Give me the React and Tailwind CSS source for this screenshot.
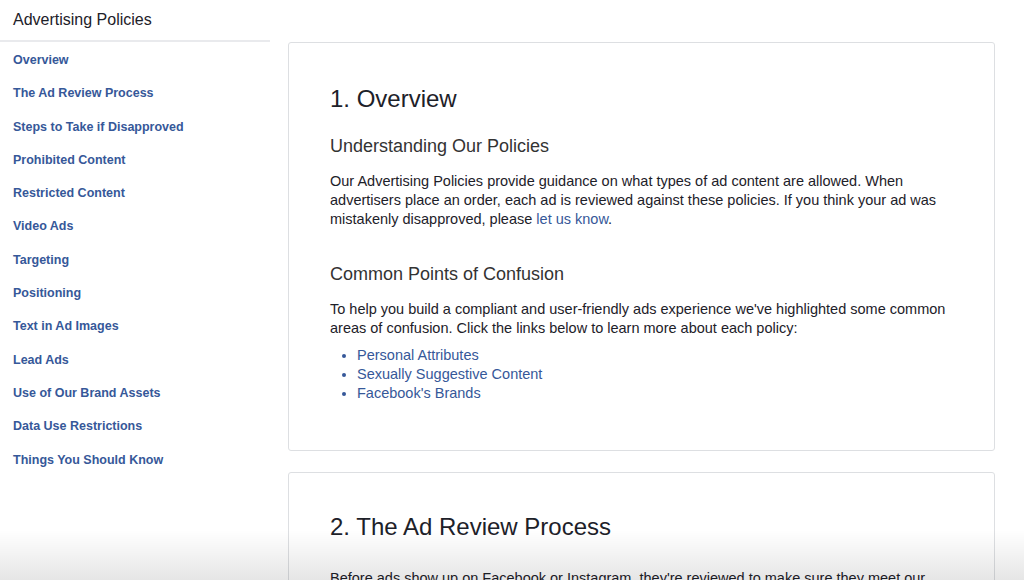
import React from 'react';

const links = ['Overview', 'The Ad Review Process', 'Steps to Take if Disapproved', 'Prohibited Content', 'Restricted Content', 'Video Ads', 'Targeting', 'Positioning', 'Text in Ad Images', 'Lead Ads', 'Use of Our Brand Assets', 'Data Use Restrictions', 'Things You Should Know'];

export default function App() {
  return (
    <div className="relative h-[580px] overflow-hidden bg-white text-[#1d2129]" style={{ fontFamily: 'Helvetica, Arial, "Liberation Sans", sans-serif' }}>
      <div className="flex">
        <div className="w-[270px] shrink-0">
          <div className="h-[42px] border-b-2 border-[#e9eaed] pl-[13px] pt-[8px] text-[16px]">Advertising Policies</div>
          <ul className="pl-[13px] pt-[10px]">
            {links.map(l => (
              <li key={l} className="h-[33.3px] text-[12.5px] font-bold leading-[16px] text-[#365899]">{l}</li>
            ))}
          </ul>
        </div>
        <div className="ml-[18px] w-[707px] pt-[42px]">
          <div className="h-[409px] rounded-[3px] border border-[#dddfe2] px-[41px] pt-[42px]">
            <h1 className="text-[24px] leading-[28px]">1. Overview</h1>
            <h2 className="mt-[22px] text-[18px] leading-[22px] text-[#333]">Understanding Our Policies</h2>
            <p className="mt-[15px] text-[14.5px] leading-[19px]">Our Advertising Policies provide guidance on what types of ad content are allowed. When advertisers place an order, each ad is reviewed against these policies. If you think your ad was mistakenly disapproved, please <span className="text-[#365899]">let us know</span>.</p>
            <h2 className="mt-[34px] text-[18px] leading-[22px] text-[#333]">Common Points of Confusion</h2>
            <p className="mt-[15px] text-[14.5px] leading-[19px]">To help you build a compliant and user-friendly ads experience we've highlighted some common areas of confusion. Click the links below to learn more about each policy:</p>
            <ul className="mt-[8px] list-disc pl-[27px] text-[14.5px] leading-[19px] text-[#365899]">
              <li>Personal Attributes</li>
              <li>Sexually Suggestive Content</li>
              <li>Facebook's Brands</li>
            </ul>
          </div>
          <div className="mt-[21px] h-[200px] rounded-[3px] border border-[#dddfe2] px-[41px] pt-[40px]">
            <h1 className="text-[24px] leading-[28px]">2. The Ad Review Process</h1>
            <p className="mt-[28px] text-[14.5px] leading-[19px]">Before ads show up on Facebook or Instagram, they're reviewed to make sure they meet our</p>
          </div>
        </div>
      </div>
      <div className="pointer-events-none absolute inset-x-0 bottom-0 h-[50px] bg-gradient-to-b from-transparent to-black/10" />
    </div>
  );
}
